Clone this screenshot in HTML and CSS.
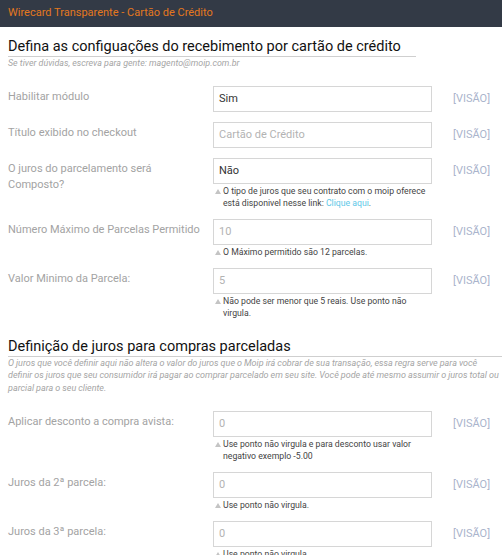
FILE: index.html
```html
<!DOCTYPE html>
<html lang="pt">
<head>
<meta charset="utf-8">
<title>Wirecard Transparente</title>
<link rel="stylesheet" href="styles.css">
</head>
<body>
<div class="topbar">Wirecard Transparente - Cartão de Crédito</div>
<div class="content">
  <section class="group">
    <h2 class="group-title short">Defina as configuações do recebimento por cartão de crédito</h2>
    <p class="group-desc">Se tiver dúvidas, escreva para gente: magento@moip.com.br</p>
    <div class="rows first">
      <div class="row">
        <div class="label">Habilitar módulo</div>
        <div class="field"><div class="input value">Sim</div></div>
        <div class="scope">[VISÃO]</div>
      </div>
      <div class="row">
        <div class="label">Título exibido no checkout</div>
        <div class="field"><div class="input placeholder">Cartão de Crédito</div></div>
        <div class="scope">[VISÃO]</div>
      </div>
      <div class="row">
        <div class="label">O juros do parcelamento será Composto?</div>
        <div class="field"><div class="input value">Não</div>
          <p class="note">O tipo de juros que seu contrato com o moip oferece está disponivel nesse link: <a href="#">Clique aqui</a>.</p></div>
        <div class="scope">[VISÃO]</div>
      </div>
      <div class="row">
        <div class="label">Número Máximo de Parcelas Permitido</div>
        <div class="field"><div class="input placeholder">10</div>
          <p class="note">O Máximo permitido são 12 parcelas.</p></div>
        <div class="scope">[VISÃO]</div>
      </div>
      <div class="row">
        <div class="label">Valor Minimo da Parcela:</div>
        <div class="field"><div class="input placeholder">5</div>
          <p class="note">Não pode ser menor que 5 reais. Use ponto não virgula.</p></div>
        <div class="scope">[VISÃO]</div>
      </div>
    </div>
  </section>
  <section class="group second">
    <h2 class="group-title">Definição de juros para compras parceladas</h2>
    <p class="group-desc long">O juros que você definir aqui não altera o valor do juros que o Moip irá cobrar de sua transação, essa regra serve para você definir os juros que seu consumidor irá pagar ao comprar parcelado em seu site. Você pode até mesmo assumir o juros total ou parcial para o seu cliente.</p>
    <div class="rows">
      <div class="row">
        <div class="label">Aplicar desconto a compra avista:</div>
        <div class="field"><div class="input placeholder">0</div>
          <p class="note">Use ponto não virgula e para desconto usar valor negativo exemplo -5.00</p></div>
        <div class="scope">[VISÃO]</div>
      </div>
      <div class="row">
        <div class="label">Juros da 2ª parcela:</div>
        <div class="field"><div class="input placeholder">0</div>
          <p class="note">Use ponto não virgula.</p></div>
        <div class="scope">[VISÃO]</div>
      </div>
      <div class="row">
        <div class="label">Juros da 3ª parcela:</div>
        <div class="field"><div class="input placeholder">0</div>
          <p class="note">Use ponto não virgula.</p></div>
        <div class="scope">[VISÃO]</div>
      </div>
    </div>
  </section>
</div>
</body>
</html>
```

FILE: styles.css
```css
html, body {
  margin: 0;
  padding: 0;
  background: #fff;
  font-family: Roboto, "Liberation Sans", Arial, sans-serif;
}
body {
  overflow: hidden;
  height: 555px;
}
.topbar {
  height: 27px;
  line-height: 26px;
  background: #333a46;
  color: #e4781e;
  font-size: 11px;
  padding-left: 8px;
}
.content {
  padding: 0 0 0 8px;
}
.group-title {
  margin: 10px 0 0;
  font-size: 14.5px;
  font-weight: 400;
  color: #111;
  line-height: 19px;
  white-space: nowrap;
  border-bottom: 1px solid #cfcfcf;
}
.group-title.short {
  width: 408px;
}
.group-desc {
  margin: 0;
  font-size: 8.9px;
  font-style: italic;
  color: #a5a5a5;
  line-height: 12.5px;
}
.group-desc.long {
  font-size: 9px;
  word-spacing: -0.2px;
}
.rows {
  margin-top: 17px;
  display: flex;
  flex-direction: column;
  gap: 10px;
}
.rows.first {
  margin-top: 16px;
}
.second {
  margin-top: 18px;
}
.row {
  display: grid;
  grid-template-columns: 205px 219px 1fr;
  align-items: start;
}
.label {
  font-size: 11px;
  line-height: 16px;
  color: #a3a3a3;
  padding-top: 3px;
  padding-right: 4px;
}
.input {
  height: 24px;
  border: 1px solid #d6d6d6;
  padding: 0 5px;
  font-size: 11px;
  line-height: 24px;
}
.value {
  color: #333;
}
.placeholder {
  color: #b3b3b3;
}
.note {
  margin: 1px 0 0;
  padding-left: 10px;
  position: relative;
  font-size: 8.7px;
  line-height: 12px;
  color: #444;
}
.note::before {
  content: "";
  position: absolute;
  left: 2px;
  top: 4px;
  border-left: 3px solid transparent;
  border-right: 3px solid transparent;
  border-bottom: 5px solid #c4c4c4;
}
.note a {
  color: #5ec8e8;
  text-decoration: none;
}
.scope {
  padding-left: 21px;
  font-size: 11px;
  line-height: 26px;
  color: #aab4cc;
}
```
